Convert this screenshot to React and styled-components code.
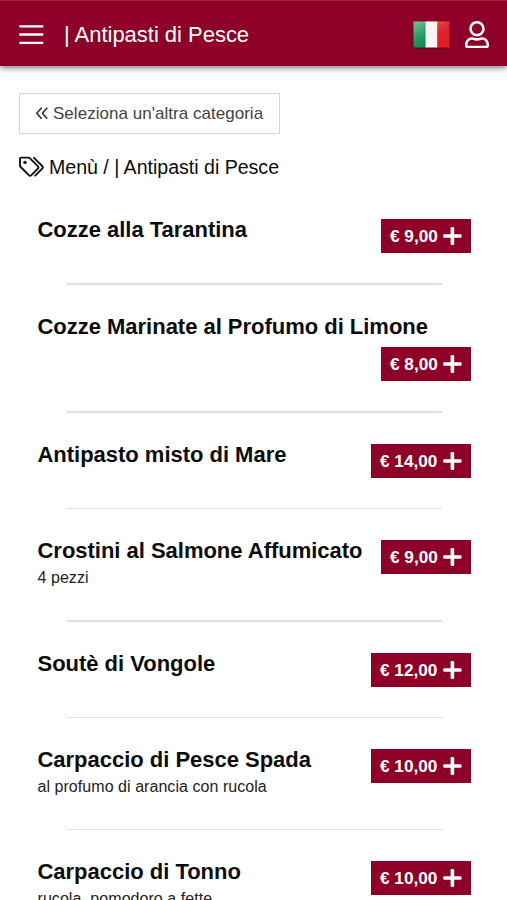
import React from "react";
import styled, { createGlobalStyle } from "styled-components";

const Global = createGlobalStyle`
  * { box-sizing: border-box; }
  html, body { margin: 0; background: #fff; }
  body {
    height: 900px;
    overflow: hidden;
    font-family: "Liberation Sans", Arial, sans-serif;
    color: #0c0c0c;
  }
`;

const Page = styled.div`
  height: 900px;
  overflow: hidden;
`;

const Header = styled.header`
  display: flex;
  align-items: center;
  height: 66px;
  padding: 2px 18px 0 19px;
  color: #fff;
  background: #8f0028;
  border-top: 1px solid #9c2444;
  box-shadow: 0 2px 6px rgba(0, 0, 0, 0.5);
`;

const PageTitle = styled.h1`
  flex: 1;
  margin: 0 0 0 20px;
  font-size: 22px;
  line-height: 28px;
  font-weight: 400;
  letter-spacing: -0.02px;
  white-space: nowrap;
`;

const Account = styled.span`
  display: flex;
  margin-left: 15px;
`;

const Content = styled.main`
  padding: 27px 19px 0;
`;

const BackButton = styled.button`
  display: flex;
  align-items: center;
  gap: 5px;
  width: 261px;
  height: 41px;
  padding: 0 0 0 15px;
  border: 1px solid #d4d4d4;
  background: #fff;
  color: #444;
  font: 400 17px/20px "Liberation Sans", Arial, sans-serif;
  letter-spacing: 0.03px;
  white-space: nowrap;
`;

const Breadcrumb = styled.div`
  display: flex;
  align-items: center;
  gap: 5px;
  height: 26px;
  margin-top: 20px;
  font-size: 19.6px;
  letter-spacing: -0.02px;
  white-space: nowrap;
`;

const Dishes = styled.ul`
  list-style: none;
  margin: 34px 0 0;
  padding: 0 17px 0 18.5px;
`;

const Dish = styled.li`
  display: flex;
  flex-wrap: wrap;
  align-items: flex-start;
  justify-content: space-between;
`;

const DishName = styled.h2`
  margin: 0;
  font-size: 22px;
  line-height: 31.6px;
  font-weight: 700;
  letter-spacing: -0.02px;
  white-space: nowrap;
`;

const Description = styled.p`
  margin: 0;
  height: 23px;
  font-size: 16px;
  line-height: 22px;
  letter-spacing: 0.05px;
  color: #222;
  white-space: nowrap;
`;

const Price = styled.button`
  display: flex;
  align-items: center;
  justify-content: space-between;
  width: ${(p) => (p.$wide ? 100 : 90)}px;
  height: 34px;
  margin: 5px 0 0 auto;
  padding: 0 9px;
  border: 0;
  background: #8f0028;
  color: #fff;
  font: 700 17.2px/20px "Liberation Sans", Arial, sans-serif;
  white-space: nowrap;
`;

const Rule = styled.hr`
  flex: 0 0 375px;
  height: 1.6px;
  margin: 30px 29px 26px 29.5px;
  border: 0;
  background: #efd8de;
`;

const MenuIcon = () => (
  <svg width="25" height="22" viewBox="0 0 25 22" stroke="#fff" strokeWidth="2.3">
    <path d="M0.3 2.3h24M0.3 10.5h24M0.3 18.8h24" />
  </svg>
);

const ItalianFlag = () => (
  <svg width="37" height="28" viewBox="0 0 37 28">
    <defs>
      <linearGradient id="shine" x1="0" y1="0" x2="0.7" y2="1">
        <stop offset="0" stopColor="#fff" stopOpacity=".42" />
        <stop offset=".5" stopColor="#fff" stopOpacity=".08" />
        <stop offset=".7" stopColor="#fff" stopOpacity="0" />
      </linearGradient>
    </defs>
    <rect y="1" width="37" height="27" rx="1" fill="#4e0818" opacity=".5" />
    <path d="M0.5 0.5h12v26h-12z" fill="#139150" />
    <path d="M12.5 0.5h12v26h-12z" fill="#f7f5f5" />
    <path d="M24.5 0.5h12v26h-12z" fill="#df2028" />
    <path d="M0.5 0.5h36v26h-36z" fill="url(#shine)" />
  </svg>
);

const UserIcon = () => (
  <svg width="24" height="27.4" viewBox="0 0 448 512" fill="#fff">
    <path d="M313.6 304c-28.7 0-42.5 16-89.6 16-47.1 0-60.8-16-89.6-16C60.2 304 0 364.2 0 438.4V464c0 26.5 21.5 48 48 48h352c26.5 0 48-21.5 48-48v-25.6c0-74.2-60.2-134.4-134.4-134.4zM400 464H48v-25.6c0-47.6 38.8-86.4 86.4-86.4 14.6 0 38.3 16 89.6 16 51.7 0 74.9-16 89.6-16 47.6 0 86.4 38.8 86.4 86.4V464zM224 288c79.5 0 144-64.5 144-144S303.5 0 224 0 80 64.5 80 144s64.5 144 144 144zm0-240c52.9 0 96 43.1 96 96s-43.1 96-96 96-96-43.1-96-96 43.1-96 96-96z" />
  </svg>
);

const BackIcon = () => (
  <svg width="13" height="14" viewBox="0 0 13 14" fill="none" stroke="#333" strokeWidth="1.7" strokeLinecap="round" strokeLinejoin="round">
    <path d="M6.2 1.2 1.8 6.2l4.4 5M11.8 1.2 7.4 6.2l4.4 5" />
  </svg>
);

const TagsIcon = () => (
  <svg width="25" height="22" viewBox="0 0 25 22" fill="none" stroke="#111" strokeWidth="1.9" strokeLinecap="round" strokeLinejoin="round">
    <path d="M1 3v6.4c0 .6.2 1.1.7 1.6l8.1 8.1c.8.8 1.8.8 2.6 0l6.4-6.4c.8-.8.8-1.8 0-2.6L11 2.3c-.5-.5-1-.7-1.6-.7H2.6C1.6 1.6 1 2.1 1 3z" />
    <path d="m15 1.8 8.2 8.2c.8.8.8 1.8 0 2.6l-7 7" />
    <circle cx="6" cy="6.4" r="1.7" fill="#111" stroke="none" />
  </svg>
);

const PlusIcon = () => (
  <svg width="19" height="18" viewBox="0 0 19 18" fill="#fff">
    <rect x="0.2" y="7.2" width="18.4" height="3.6" rx="1.2" />
    <rect x="7.6" y="0" width="3.6" height="18" rx="1.2" />
  </svg>
);

const dishes = [
  { name: "Cozze alla Tarantina", price: "9,00" },
  { name: "Cozze Marinate al Profumo di Limone", price: "8,00" },
  { name: "Antipasto misto di Mare", price: "14,00" },
  { name: "Crostini al Salmone Affumicato", description: "4 pezzi", price: "9,00" },
  { name: "Soutè di Vongole", price: "12,00" },
  { name: "Carpaccio di Pesce Spada", description: "al profumo di arancia con rucola", price: "10,00" },
  { name: "Carpaccio di Tonno", description: "rucola, pomodoro a fette", price: "10,00" },
];

export default function App() {
  return (
    <Page>
      <Global />
      <Header>
        <MenuIcon />
        <PageTitle>| Antipasti di Pesce</PageTitle>
        <ItalianFlag />
        <Account>
          <UserIcon />
        </Account>
      </Header>
      <Content>
        <BackButton>
          <BackIcon />
          Seleziona un'altra categoria
        </BackButton>
        <Breadcrumb>
          <TagsIcon />
          <span>Menù / | Antipasti di Pesce</span>
        </Breadcrumb>
        <Dishes>
          {dishes.map(({ name, description, price }) => (
            <Dish key={name}>
              <div>
                <DishName>{name}</DishName>
                {description && <Description>{description}</Description>}
              </div>
              <Price $wide={price.length > 4}>
                <span>€ {price}</span>
                <PlusIcon />
              </Price>
              <Rule />
            </Dish>
          ))}
        </Dishes>
      </Content>
    </Page>
  );
}
